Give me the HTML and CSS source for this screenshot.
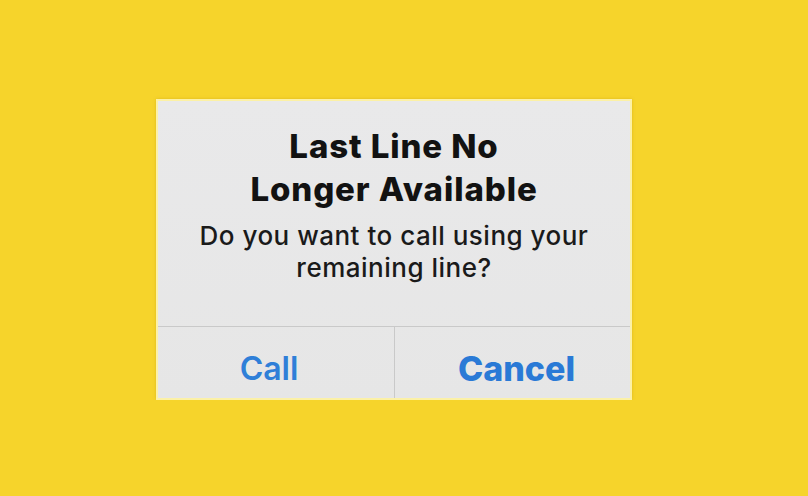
FILE: index.html
```html
<!DOCTYPE html>
<html lang="en">
<head>
    <meta charset="UTF-8">
    <meta name="viewport" content="width=device-width, initial-scale=1.0">
    <title>Last Line No Longer Available</title>
    <link rel="stylesheet" href="styles.css">
</head>
<body>
    <div class="page">
        <div class="alert">
            <div class="alert-body">
                <h1>Last Line No<br>Longer Available</h1>
                <p>Do you want to call using your<br>remaining line?</p>
            </div>
            <div class="alert-actions">
                <button class="action action-call">Call</button>
                <button class="action action-bold">Cancel</button>
            </div>
        </div>
    </div>
</body>
</html>
```

FILE: styles.css
```css
/* General reset */
* {
    margin: 0;
    padding: 0;
    box-sizing: border-box;
}

body {
    font-family: 'Inter', 'Liberation Sans', sans-serif;
    background: #f6d42b;
    color: #121212;
}

.page {
    padding: 99px 0 0 156px;
}

/* Alert box */
.alert {
    width: 476px;
    height: 301px;
    display: flex;
    flex-direction: column;
    background: linear-gradient(#e9e9ea, #e6e6e6);
    border: 2px solid #fcf1a6;
    box-shadow: 0 0 3px rgba(180, 140, 0, 0.35);
}

.alert-body {
    height: 226px;
    padding-top: 24px;
    text-align: center;
    border-bottom: 1px solid #c9c9c9;
}

h1 {
    font-size: 33px;
    font-weight: 780;
    line-height: 43px;
    letter-spacing: 0.9px;
}

p {
    margin-top: 9px;
    font-size: 26px;
    font-weight: 550;
    line-height: 32px;
    letter-spacing: 0.5px;
    color: #1a1a1a;
}

.alert-actions {
    flex: 1;
    display: flex;
}

/* two equal halves, padding kept inside each half */
.action {
    flex: 0 0 50%;
    border: none;
    background: transparent;
    font-family: inherit;
    font-size: 32px;
    font-weight: 600;
    color: #2f7fd8;
    padding-top: 12px;
}

.action-call {
    padding-right: 14px;
}

.action + .action {
    border-left: 1px solid #c9c9c9;
}

.action-bold {
    padding-left: 8px;
    font-size: 34px;
    font-weight: 800;
    color: #2a7ad6;
}
```
